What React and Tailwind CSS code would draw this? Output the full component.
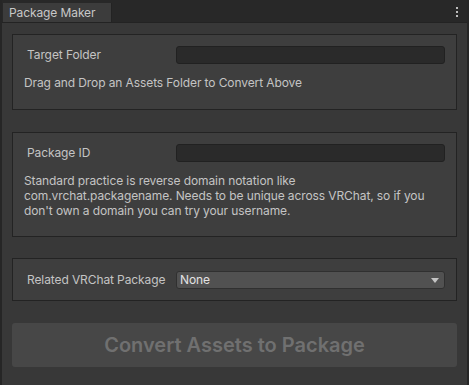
const FONT = { fontFamily: 'Inter, "Noto Sans", sans-serif' };

function TextField() {
  return <div className="h-[18px] flex-1 rounded-[3px] border border-[#212121] bg-[#2a2a2a]" />;
}

function Panel({ className, children }) {
  return (
    <div className={`border border-[#232323] bg-[#3e3e3e] px-[11px] ${className}`}>
      {children}
    </div>
  );
}

export default function App() {
  return (
    <div
      className="flex h-[385px] w-[469px] flex-col border-x-2 border-[#262626] bg-[#383838] text-[12px] tracking-[-0.1px] text-[#c4c4c4]"
      style={FONT}
    >
      {/* tab strip */}
      <div className="flex h-[23px] items-end border-b border-[#232323] bg-[#282828] pl-[1px]">
        <div className="flex h-[19px] w-[109px] items-center border-r border-[#232323] bg-[#3c3c3c] pl-[6px] text-[12px] text-[#c8c8c8]">
          Package Maker
        </div>
        <div className="flex-1" />
        <div className="mr-[9px] mb-[4px] flex flex-col gap-[2px] self-end pb-[1px]">
          <span className="block h-[2px] w-[2px] bg-[#bdbdbd]" />
          <span className="block h-[2px] w-[2px] bg-[#bdbdbd]" />
          <span className="block h-[2px] w-[2px] bg-[#bdbdbd]" />
        </div>
      </div>

      <div className="flex flex-1 flex-col px-[10px] pt-[11px]">
        <Panel className="pt-[11px] pb-[19px]">
          <div className="flex items-center">
            <div className="w-[152px] pl-[3px] leading-[18px]">Target Folder</div>
            <TextField />
          </div>
          <p className="mt-[11px] leading-[15px]">Drag and Drop an Assets Folder to Convert Above</p>
        </Panel>

        <Panel className="mt-[22px] pt-[11px] pb-[18px]">
          <div className="flex items-center">
            <div className="w-[152px] pl-[3px] leading-[18px]">Package ID</div>
            <TextField />
          </div>
          <p className="mt-[11px] leading-[15px]">
            Standard practice is reverse domain notation like
            <br />
            com.vrchat.packagename. Needs to be unique across VRChat, so if you
            <br />
            don&apos;t own a domain you can try your username.
          </p>
        </Panel>

        <Panel className="mt-[21px] pt-[12px] pb-[11px]">
          <div className="flex items-center">
            <div className="w-[152px] pl-[3px] leading-[18px]">Related VRChat Package</div>
            <div className="flex h-[18px] flex-1 items-center justify-between rounded-[3px] border border-[#303030] bg-[#515151] pl-[3px] pr-[5px] text-[#e2e2e2]">
              <span>None</span>
              <svg width="8" height="5" viewBox="0 0 8 5">
                <path d="M0 0h8L4 5z" fill="#c4c4c4" />
              </svg>
            </div>
          </div>
        </Panel>

        <div className="mt-[22px] flex h-[44px] items-center justify-center rounded-[3px] bg-[#474747] text-[20px] font-semibold tracking-normal text-[#707070]">
          Convert Assets to Package
        </div>
      </div>
    </div>
  );
}
